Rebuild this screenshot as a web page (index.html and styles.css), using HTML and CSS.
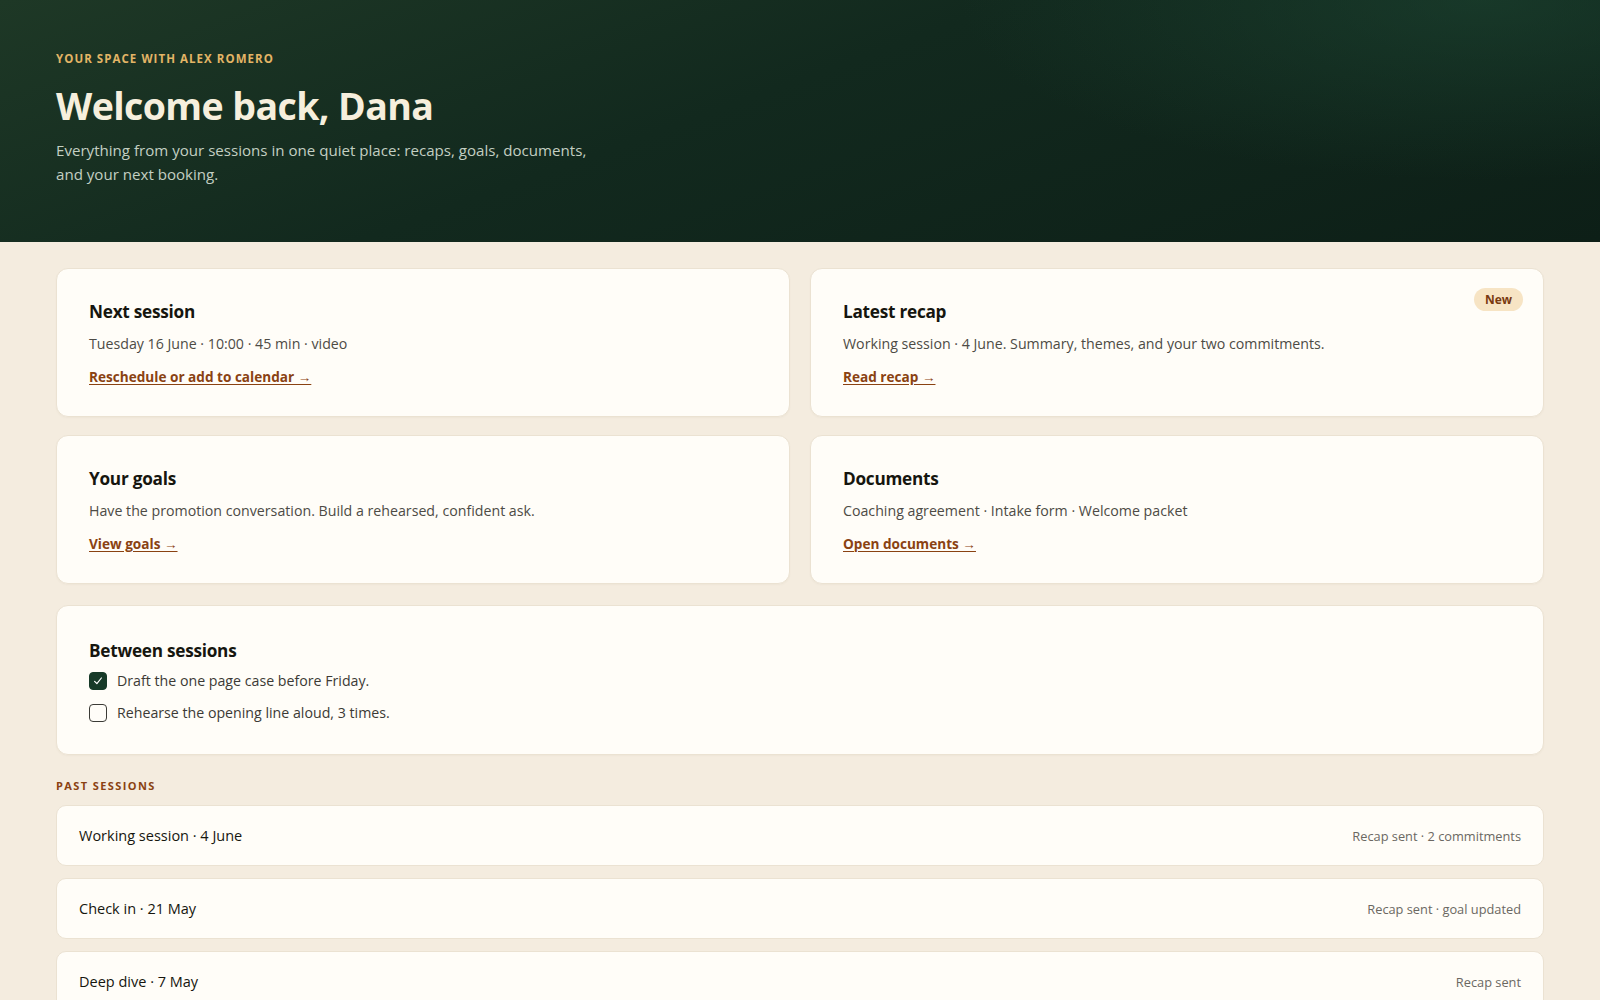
FILE: index.html
```html
<!DOCTYPE html>
<html lang="en">
<head>
<meta charset="utf-8">
<title>Your space · Dana</title>
<link rel="stylesheet" href="styles.css">
</head>
<body>
<header class="hero">
  <p class="eyebrow">Your space with Alex Romero</p>
  <h1 class="hero-title">Welcome back, Dana</h1>
  <p class="hero-lead">Everything from your sessions in one quiet place: recaps, goals, documents, and your next booking.</p>
</header>

<main class="content">
  <section class="card-grid">
    <article class="card">
      <h2 class="card-title">Next session</h2>
      <p class="card-text">Tuesday 16 June · 10:00 · 45 min · video</p>
      <a class="card-link" href="#">Reschedule or add to calendar →</a>
    </article>
    <article class="card">
      <span class="badge">New</span>
      <h2 class="card-title">Latest recap</h2>
      <p class="card-text">Working session · 4 June. Summary, themes, and your two commitments.</p>
      <a class="card-link" href="#">Read recap →</a>
    </article>
    <article class="card">
      <h2 class="card-title">Your goals</h2>
      <p class="card-text">Have the promotion conversation. Build a rehearsed, confident ask.</p>
      <a class="card-link" href="#">View goals →</a>
    </article>
    <article class="card">
      <h2 class="card-title">Documents</h2>
      <p class="card-text">Coaching agreement · Intake form · Welcome packet</p>
      <a class="card-link" href="#">Open documents →</a>
    </article>
  </section>

  <section class="card card-wide">
    <h2 class="card-title">Between sessions</h2>
    <ul class="tasks">
      <li class="task">
        <span class="box box-done">
          <svg viewBox="0 0 16 16" width="12" height="12"><path d="M3.5 8.5 L6.5 11.5 L12.5 4" fill="none" stroke="#ffffff" stroke-width="1.6" stroke-linecap="round" stroke-linejoin="round"/></svg>
        </span>
        <span>Draft the one page case before Friday.</span>
      </li>
      <li class="task">
        <span class="box"></span>
        <span>Rehearse the opening line aloud, 3 times.</span>
      </li>
    </ul>
  </section>

  <h3 class="section-label">Past sessions</h3>
  <ul class="sessions">
    <li class="session"><span class="session-name">Working session · 4 June</span><span class="session-meta">Recap sent · 2 commitments</span></li>
    <li class="session"><span class="session-name">Check in · 21 May</span><span class="session-meta">Recap sent · goal updated</span></li>
    <li class="session"><span class="session-name">Deep dive · 7 May</span><span class="session-meta">Recap sent</span></li>
  </ul>
</main>
</body>
</html>
```

FILE: styles.css
```css
* { box-sizing: border-box; }

html, body {
  margin: 0;
  padding: 0;
}

body {
  background: #f4ecdf;
  font-family: "Open Sans", "Noto Sans", "Liberation Sans", sans-serif;
  color: #1c1c19;
}

/* Top banner */
.hero {
  height: 242px;
  padding: 51px 56px 0;
  background:
    radial-gradient(ellipse 520px 180px at 1480px 0, rgba(30, 72, 52, 0.55), rgba(30, 72, 52, 0) 100%),
    linear-gradient(160deg, #1e3826 0%, #12291e 45%, #0d1f17 100%);
}

.eyebrow {
  margin: 0;
  font-size: 11.5px;
  font-weight: 700;
  letter-spacing: 1.05px;
  text-transform: uppercase;
  color: #e3b566;
  line-height: 16px;
}

.hero-title {
  margin: 16px 0 0;
  font-size: 37.5px;
  font-weight: 700;
  letter-spacing: -0.6px;
  line-height: 46px;
  color: #f6efdd;
}

.hero-lead {
  margin: 9px 0 0;
  max-width: 560px;
  font-size: 15.1px;
  line-height: 24px;
  color: #c3cfc2;
}

/* Main area */
.content {
  padding: 26px 56px 40px;
}

.card-grid {
  display: grid;
  grid-template-columns: 1fr 1fr;
  column-gap: 20px;
  row-gap: 18px;
}

.card {
  position: relative;
  background: #fffdf8;
  border: 1px solid #ebe2d2;
  border-radius: 12px;
  padding: 30px 32px 29px;
  box-shadow: 0 1px 2px rgba(90, 70, 40, 0.04);
}

.card-title {
  margin: 0;
  font-size: 17.2px;
  font-weight: 700;
  line-height: 26px;
  color: #16160f;
  letter-spacing: -0.25px;
}

.card-text {
  margin: 8px 0 0;
  font-size: 14.2px;
  line-height: 22px;
  color: #4d4b45;
}

.card-link {
  display: inline-block;
  margin-top: 12px;
  font-size: 13.6px;
  font-weight: 700;
  line-height: 20px;
  color: #8a4212;
  text-decoration: underline;
  text-underline-offset: 2px;
}

.badge {
  position: absolute;
  top: 19px;
  right: 20px;
  padding: 3px 11px;
  border-radius: 999px;
  background: #f7e4c4;
  color: #7a3a10;
  font-size: 12px;
  font-weight: 700;
  line-height: 17px;
}

/* Between sessions */
.card-wide {
  margin-top: 21px;
  padding-top: 32px;
  padding-bottom: 30px;
}

.tasks {
  list-style: none;
  margin: 6px 0 0;
  padding: 0;
}

.task {
  display: flex;
  align-items: center;
  gap: 10px;
  font-size: 14.2px;
  line-height: 22px;
  color: #3c3a35;
  margin-top: 10px;
}

.task:first-child { margin-top: 0; }

.box {
  flex: none;
  width: 18px;
  height: 18px;
  border: 1.5px solid #3b3b36;
  border-radius: 4px;
  background: #fffdf8;
  display: flex;
  align-items: center;
  justify-content: center;
}

.box-done {
  background: #173a28;
  border-color: #173a28;
}

/* Past sessions */
.section-label {
  margin: 23px 0 0;
  font-size: 11px;
  font-weight: 700;
  letter-spacing: 1.4px;
  text-transform: uppercase;
  color: #8a4212;
  line-height: 16px;
}

.sessions {
  list-style: none;
  margin: 11px 0 0;
  padding: 0;
  display: flex;
  flex-direction: column;
  gap: 12px;
}

.session {
  display: flex;
  justify-content: space-between;
  align-items: center;
  height: 61px;
  padding: 0 22px;
  background: #fffdf8;
  border: 1px solid #ebe2d2;
  border-radius: 10px;
}

.session-name {
  font-size: 14.5px;
  font-weight: 500;
  color: #16160f;
}

.session-meta {
  font-size: 12.8px;
  color: #6b6862;
}
```
